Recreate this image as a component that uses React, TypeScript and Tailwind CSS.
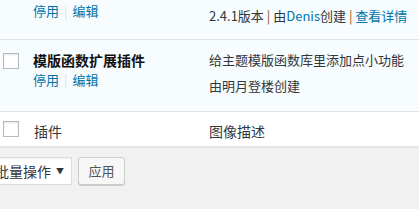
import React from "react";

const font = {
  fontFamily: '"Noto Sans CJK SC", "Noto Sans", sans-serif',
};

function Check() {
  return (
    <span className="block w-4 h-4 bg-white border border-[#b4b9be] shadow-[inset_0_1px_2px_rgba(0,0,0,0.1)]" />
  );
}

function RowActions() {
  return (
    <div className="flex items-center text-[13px] leading-[18px] text-[#0073aa]">
      <span>停用</span>
      <span className="mx-[5px] text-[#ddd]">|</span>
      <span>编辑</span>
    </div>
  );
}

export default function App() {
  return (
    <div
      className="w-[419px] h-[209px] overflow-hidden bg-[#f1f1f1] text-[#32373c]"
      style={font}
    >
      {/* plugin table */}
      <div className="w-[440px] bg-white">
        {/* active row, tail end */}
        <div className="grid grid-cols-[33px_176px_1fr] h-[40px] bg-[#f7fcfe] border-b border-[#e1e1e1]">
          <div />
          <div className="pt-[2px]">
            <RowActions />
          </div>
          <div className="pt-[7px] text-[13px] leading-[18px] whitespace-nowrap">
            2.4.1版本 <span className="text-[#8a5a2b]">|</span> 由
            <span className="text-[#0073aa]">Denis</span>创建{" "}
            <span className="text-[#8a5a2b]">|</span>{" "}
            <span className="text-[#0073aa]">查看详情</span>
          </div>
        </div>

        {/* 模版函数扩展插件 */}
        <div className="grid grid-cols-[33px_176px_1fr] h-[72px] bg-[#f7fcfe] border-b border-[#e1e1e1]">
          <div className="pl-[3px] pt-[13px]">
            <Check />
          </div>
          <div className="pt-[10px]">
            <div className="text-[14px] leading-[20px] font-bold text-[#111]">
              模版函数扩展插件
            </div>
            <div className="mt-px">
              <RowActions />
            </div>
          </div>
          <div className="pt-[11px] text-[13px] leading-[18px] whitespace-nowrap">
            <p>给主题模版函数库里添加点小功能</p>
            <p className="mt-[8px]">由明月登楼创建</p>
          </div>
        </div>

        {/* tfoot */}
        <div className="grid grid-cols-[33px_176px_1fr] h-[35px] bg-white border-b border-[#e5e5e5] shadow-[0_1px_1px_rgba(0,0,0,0.04)]">
          <div className="pl-[3px] pt-[9px]">
            <Check />
          </div>
          <div className="pt-[9px] pl-px text-[14px] leading-[20px]">插件</div>
          <div className="pt-[9px] text-[14px] leading-[20px]">图像描述</div>
        </div>
      </div>

      {/* tablenav */}
      <div className="flex items-center gap-[6px] mt-[10px]">
        <div className="-ml-[10px] w-[82px] h-[28px] bg-white border border-[#ddd] shadow-[inset_0_1px_2px_rgba(0,0,0,0.07)] flex items-center justify-between pl-[4px] pr-[7px]">
          <span className="text-[14px] leading-[20px] whitespace-nowrap">批量操作</span>
          <span className="text-[8px] leading-none text-[#32373c]">▼</span>
        </div>
        <div className="w-[47px] h-[28px] rounded-[3px] bg-[#f7f7f7] border border-[#ccc] shadow-[0_1px_0_#ccc] flex items-center justify-center text-[13px] leading-[18px] text-[#555]">
          应用
        </div>
      </div>
    </div>
  );
}
